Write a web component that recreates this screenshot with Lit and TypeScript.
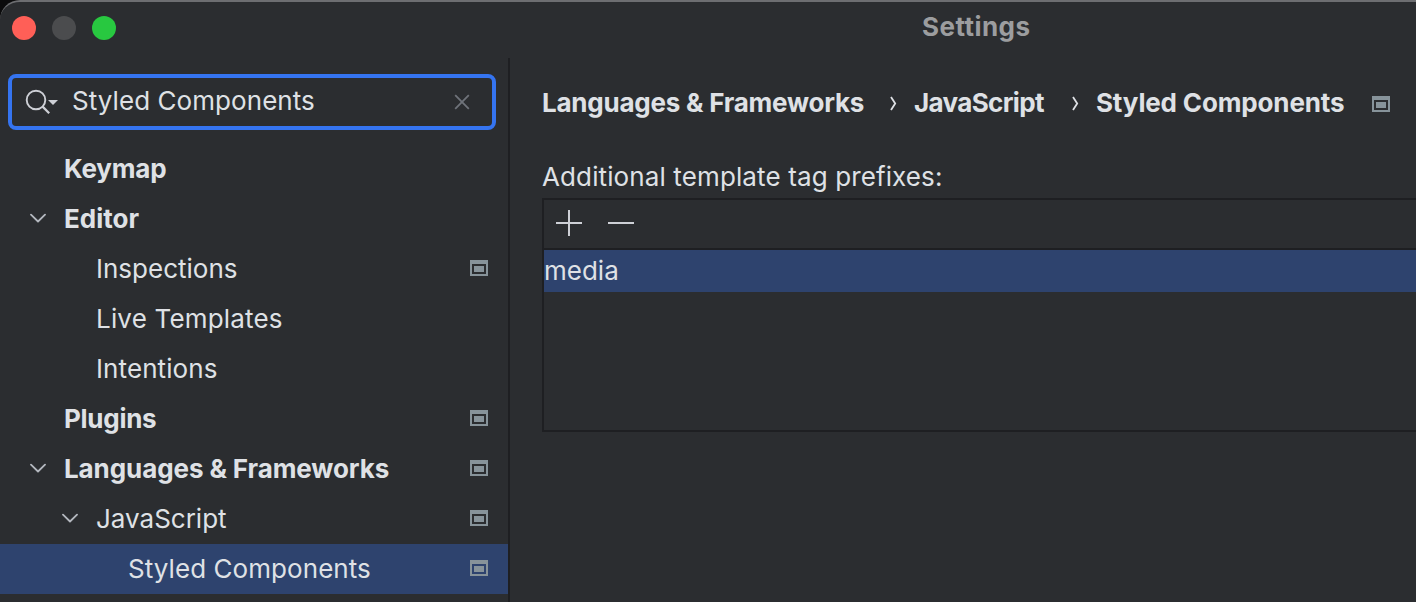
import { LitElement, html, css, nothing } from "lit";
import { customElement, property } from "lit/decorators.js";
import { classMap } from "lit/directives/class-map.js";

interface TreeItem {
  label: string;
  level: number;
  kind: string;
  bold?: boolean;
  open?: boolean;
  badge?: boolean;
  selected?: boolean;
}

const ITEMS: TreeItem[] = [
  { label: "Keymap", level: 0, kind: "keymap", bold: true },
  { label: "Editor", level: 0, kind: "editor", bold: true, open: true },
  { label: "Inspections", level: 1, kind: "inspections", badge: true },
  { label: "Live Templates", level: 1, kind: "templates" },
  { label: "Intentions", level: 1, kind: "intentions" },
  { label: "Plugins", level: 0, kind: "plugins", bold: true, badge: true },
  { label: "Languages & Frameworks", level: 0, kind: "languages", bold: true, open: true, badge: true },
  { label: "JavaScript", level: 1, kind: "javascript", open: true, badge: true },
  { label: "Styled Components", level: 2, kind: "styled", badge: true, selected: true },
];

@customElement("project-badge")
class ProjectBadge extends LitElement {
  static styles = css`
    :host { display: block; width: 18px; height: 16px; flex: none; }
    .icon { display: block; }
  `;
  render() {
    return html`<svg class="icon" width="18" height="16" viewBox="0 0 18 16" shape-rendering="crispEdges">
      <path fill="#87939a" fill-rule="evenodd" d="M0 0H18V16H0ZM2 4V14H16V4ZM4 6H14V12H4Z" />
    </svg>`;
  }
}

@customElement("tree-row")
class TreeRow extends LitElement {
  @property({ attribute: false }) item!: TreeItem;
  static styles = css`
    :host { display: block; }
    .row { display: flex; align-items: center; box-sizing: border-box; height: 50px; padding-right: 20px; }
    .level0 { padding-left: 30px; }
    .level1 { padding-left: 62px; }
    .level2 { padding-left: 94px; }
    .selected { background: #2e436e; }
    .arrow { width: 34px; height: 50px; flex: none; }
    .chevron { display: block; }
    .label { flex: 1; line-height: 50px; white-space: nowrap; }
    .bold { font-weight: 700; }
    .badge { margin-bottom: 2px; }
    .keymap { letter-spacing: -0.2px; }
    .templates { letter-spacing: 0.18px; }
    .intentions { letter-spacing: 0.1px; }
    .plugins { letter-spacing: -0.28px; }
    .languages { letter-spacing: -0.09px; }
    .styled { letter-spacing: 0.06px; }
  `;
  render() {
    const i = this.item;
    return html`<div class=${classMap({ row: true, [`level${i.level}`]: true, selected: !!i.selected })}>
      <div class="arrow">
        ${i.open
          ? html`<svg class="chevron" width="16" height="50" viewBox="0 0 16 50" fill="none">
              <path d="M1 20.7L8 27.5L15 20.7" stroke="#b4b8bf" stroke-width="1.8" stroke-linecap="round" stroke-linejoin="round" />
            </svg>`
          : nothing}
      </div>
      <span class=${classMap({ label: true, bold: !!i.bold, [i.kind]: true })}>${i.label}</span>
      ${i.badge ? html`<project-badge class="badge"></project-badge>` : nothing}
    </div>`;
  }
}

@customElement("app-root")
class AppRoot extends LitElement {
  static styles = css`
    :host { display: block; width: 1416px; height: 602px; overflow: hidden; background: #0b0b0c;
      font-family: Inter, sans-serif; font-size: 26px; color: #dfe1e5; }
    .window { display: flex; flex-direction: column; box-sizing: border-box; width: 1440px; height: 640px;
      background: #2b2d30; border-top: 2px solid #6d6e71; border-left: 0; border-top-left-radius: 20px; }
    .titlebar { display: flex; align-items: center; height: 56px; flex: none; padding-left: 12px; box-sizing: border-box; }
    .lights { display: flex; gap: 16px; margin-bottom: 4px; }
    .light { width: 24px; height: 24px; border-radius: 50%; }
    .red { background: #ff5f57; }
    .gray { background: #4b4c4e; }
    .green { background: #28c840; }
    .title { margin: 0 0 6px 806px; font-weight: 700; color: #9c9d9f; line-height: 32px; letter-spacing: 0.45px; }
    .body { display: flex; flex: 1; }
    .sidebar { width: 508px; border-right: 2px solid #1e1f22; padding-top: 16px; flex: none; }
    .search { display: flex; align-items: center; box-sizing: border-box; width: 488px; height: 56px; margin: 0 0 14px 8px;
      border: 4px solid #3574f0; border-radius: 8px; padding: 0 22px 0 12px; }
    .query { flex: 1; margin-left: 12px; margin-bottom: 2px; line-height: 40px; white-space: nowrap; letter-spacing: 0.06px; }
    .glyph { display: block; flex: none; }
    .content { flex: 1; padding-left: 32px; min-width: 0; }
    .crumbs { display: flex; align-items: center; height: 40px; margin-top: 25px; font-weight: 700; white-space: nowrap; }
    .crumb { line-height: 40px; flex: none; }
    .c1 { width: 348px; letter-spacing: -0.23px; }
    .c2 { width: 158px; letter-spacing: -0.65px; }
    .c3 { width: 276px; letter-spacing: -0.15px; }
    .sep { width: 24px; flex: none; }
    .where { margin-top: 2px; }
    .caption { margin-top: 35px; line-height: 38px; height: 38px; white-space: nowrap; letter-spacing: 0.12px; }
    .list { box-sizing: border-box; height: 234px; margin-top: 2px; border: 2px solid #1e1f22; }
    .tools { display: flex; align-items: center; gap: 26px; height: 46px; padding: 0 0 2px 12px;
      border-bottom: 2px solid #1e1f22; }
    .entry { height: 42px; line-height: 42px; background: #2e436e; }
  `;

  private separator() {
    return html`<svg class="sep" width="24" height="16" viewBox="0 0 24 16" fill="none">
      <path d="M1 2L5.2 8.4L1 15" stroke="#dfe1e5" stroke-width="1.8" />
    </svg>`;
  }

  render() {
    return html`<div class="window">
      <div class="titlebar">
        <div class="lights">
          <div class="light red"></div>
          <div class="light gray"></div>
          <div class="light green"></div>
        </div>
        <div class="title">Settings</div>
      </div>
      <div class="body">
        <div class="sidebar">
          <div class="search">
            <svg class="glyph" width="36" height="28" viewBox="0 0 36 28" fill="none">
              <circle cx="12" cy="12" r="9.3" stroke="#ced0d6" stroke-width="1.9" />
              <path d="M18.6 18.6L25.2 25.2" stroke="#ced0d6" stroke-width="2.2" />
              <path d="M24 12H34L29 17Z" fill="#ced0d6" />
            </svg>
            <span class="query">Styled Components</span>
            <svg class="glyph" width="16" height="16" viewBox="0 0 16 16">
              <path d="M1.2 1.2L14.8 14.8M14.8 1.2L1.2 14.8" stroke="#6f737a" stroke-width="1.8" />
            </svg>
          </div>
          ${ITEMS.map((item) => html`<tree-row .item=${item}></tree-row>`)}
        </div>
        <div class="content">
          <div class="crumbs">
            <span class="crumb c1">Languages &amp; Frameworks</span>${this.separator()}
            <span class="crumb c2">JavaScript</span>${this.separator()}
            <span class="crumb c3">Styled Components</span>
            <project-badge class="where"></project-badge>
          </div>
          <div class="caption">Additional template tag prefixes:</div>
          <div class="list">
            <div class="tools">
              <svg class="glyph" width="26" height="26" viewBox="0 0 26 26">
                <path d="M0 13H26M13 0V26" stroke="#ced0d6" stroke-width="2" />
              </svg>
              <svg class="glyph" width="26" height="26" viewBox="0 0 26 26">
                <path d="M0 13H26" stroke="#ced0d6" stroke-width="2" />
              </svg>
            </div>
            <div class="entry">media</div>
          </div>
        </div>
      </div>
    </div>`;
  }
}
